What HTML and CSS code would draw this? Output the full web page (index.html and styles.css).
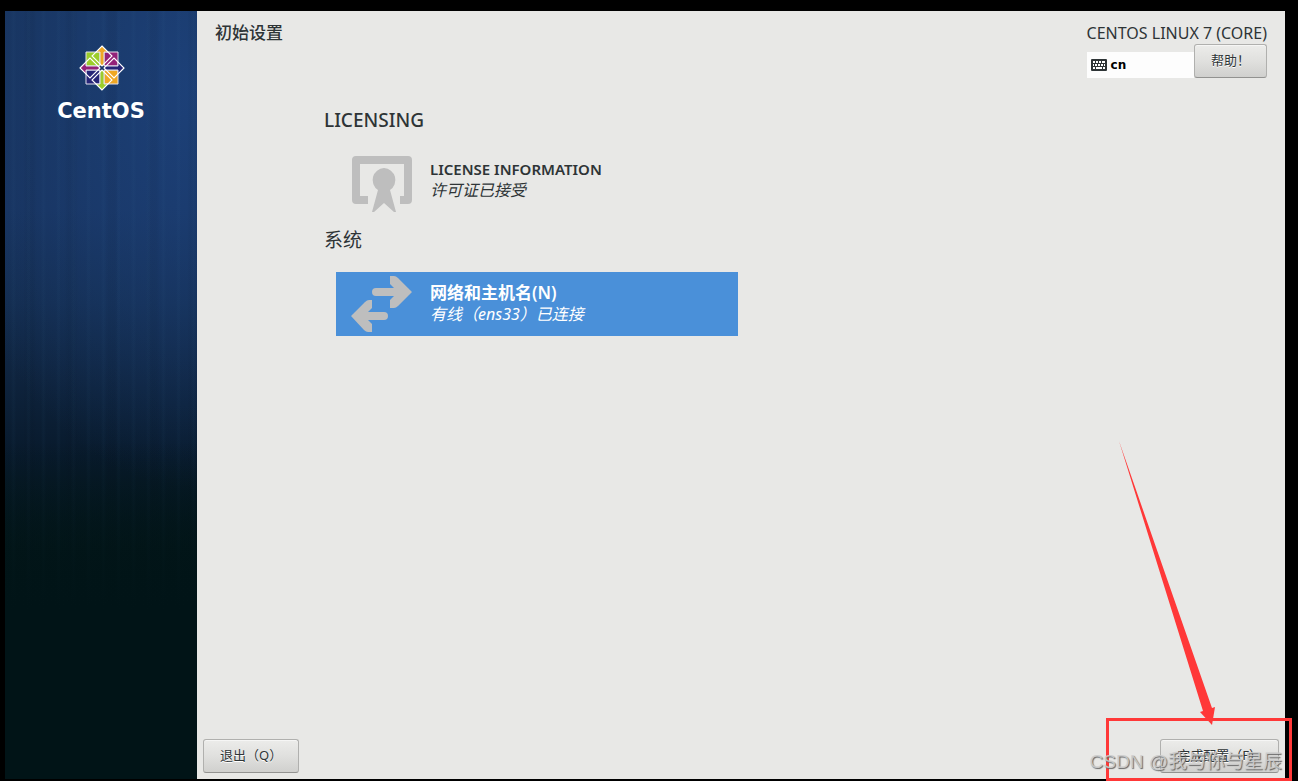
FILE: index.html
```html
<!DOCTYPE html>
<html lang="zh-CN">
<head>
<meta charset="utf-8">
<title>初始设置</title>
<link rel="stylesheet" href="styles.css">
</head>
<body>
<div class="screen">
  <aside class="sidebar">
    <svg class="logo" viewBox="-23 -23 46 46" aria-hidden="true">
      <g stroke="#e4e2ee" stroke-width="1">
        <path d="M-16-16H-2V-2H-16Z" fill="#9ccd2a"/>
        <path d="M2-16H16V-2H2Z" fill="#932279"/>
        <path d="M-16 2H-2V16H-16Z" fill="#262577"/>
        <path d="M2 2H16V16H2Z" fill="#efa724"/>
      </g>
      <g stroke="#e4e2ee" stroke-width="1">
        <path d="M0-22L6-16H2V-2H-2V-16H-6Z" fill="#efa724"/>
        <path d="M22 0L16 6V2H2V-2H16V-6Z" fill="#262577"/>
        <path d="M0 22L-6 16H-2V2H2V16H6Z" fill="#9ccd2a"/>
        <path d="M-22 0L-16-6V-2H-2V2H-16V6Z" fill="#932279"/>
      </g>
      <path d="M0-22L10-12L0-2L-10-12ZM22 0L12 10L2 0L12-10ZM0 22L-10 12L0 2L10 12ZM-22 0L-12-10L-2 0L-12 10Z" fill="none" stroke="#fff" stroke-width="1.1"/>
      <path d="M-2-2L2 2M2-2L-2 2" stroke="#1c3766" stroke-width="1.5"/>
    </svg>
    <div class="wordmark">CentOS</div>
  </aside>
  <main class="content">
    <header class="header">
      <h1 class="title">初始设置</h1>
      <div class="product">
        <div class="distro">CENTOS LINUX 7 (CORE)</div>
        <div class="tools">
          <button class="layout" type="button">
            <svg class="keyboard" viewBox="0 0 16 12" aria-hidden="true">
              <rect width="16" height="12" rx="1" fill="#2e3436"/>
              <path d="M2 3H4M5 3H7M8 3H10M11 3H14M2 6H3M4 6H6M7 6H9M10 6H12M13 6H14M2 9H4M5 9H11M12 9H14" stroke="#fff" stroke-width="2"/>
            </svg>
            cn
          </button>
          <button class="button" type="button">帮助！</button>
        </div>
      </div>
    </header>
    <div class="hub">
      <h2 class="category" lang="en">LICENSING</h2>
      <button class="spoke" type="button">
        <svg class="spoke-icon" viewBox="0 0 64 64" aria-hidden="true">
          <path d="M6 4H58Q62 4 62 8V48Q62 52 58 52H50V44H54V12H10V44H18V52H6Q2 52 2 48V8Q2 4 6 4Z" fill="#bebebe"/>
          <path d="M34 16A12 12 0 0 1 40 38L46 60H44L34 51L24 60H22L28 38A12 12 0 0 1 34 16Z" fill="#bebebe"/>
        </svg>
        <span class="spoke-text">
          <span class="spoke-title">LICENSE INFORMATION</span>
          <span class="spoke-status">许可证已接受</span>
        </span>
      </button>
      <h2 class="category">系统</h2>
      <button class="spoke selected" type="button">
        <svg class="spoke-icon" viewBox="0 0 64 64" aria-hidden="true">
          <path d="M26 16H44L40 12V4H44Q46 4 48 6L62 20L48 34Q46 36 44 36H40V28L44 24H26A4 4 0 0 1 26 16Z" fill="#bebebe"/>
          <path d="M34 48H18L22 52V60H18Q16 60 14 58L1 44L15 30Q17 28 19 28H22V36L18 40H34A4 4 0 0 1 34 48Z" fill="#bebebe"/>
        </svg>
        <span class="spoke-text">
          <span class="spoke-title">网络和主机名(N)</span>
          <span class="spoke-status">有线（ens33）已连接</span>
        </span>
      </button>
    </div>
    <footer class="footer">
      <button class="button" type="button">退出（Q）</button>
      <button class="button" type="button">完成配置（F）</button>
    </footer>
  </main>
</div>
<svg class="pointer" viewBox="0 0 98 286" aria-hidden="true">
  <path d="M1 2L94 269L97 268L94 286L82 273L85 272Z" fill="#ff3838"/>
</svg>
<div class="highlight"></div>
<div class="watermark">CSDN @我与你与星辰</div>
</body>
</html>
```
FILE: styles.css
```css
* {
  box-sizing: border-box;
}

body {
  position: relative;
  min-height: 100vh;
  margin: 0;
  padding: 11px 13px 2px 5px;
  display: flex;
  overflow: hidden;
  background: #000;
  color: #2e3436;
  font-family: "Noto Sans", "Noto Sans CJK SC", sans-serif;
  font-size: 15px;
}

button {
  margin: 0;
  border: 0;
  color: inherit;
  font: inherit;
}

h1,
h2 {
  margin: 0;
}

.screen {
  flex: 1;
  display: flex;
}

.sidebar {
  flex: 0 0 192px;
  display: flex;
  flex-direction: column;
  align-items: center;
  padding-top: 34px;
  background:
    linear-gradient(to bottom, rgba(1, 20, 23, 0) 56%, #011417 78%),
    repeating-linear-gradient(90deg, transparent 0 6px, rgba(70, 130, 170, 0.04) 8px 9px, transparent 11px 15px),
    repeating-linear-gradient(90deg, transparent 0 18px, rgba(0, 10, 20, 0.05) 22px 28px, transparent 32px 41px),
    radial-gradient(ellipse 260px 400px at 100% 10%, rgba(30, 68, 128, 0.8), transparent),
    linear-gradient(to bottom, #17325a 0, #17325c 26%, #132c4e 38%, #0e233d 48%, #081a2c 58%, #031619 70%, #011417 78%);
}

.logo {
  width: 46px;
  height: 46px;
  margin-left: 2px;
}

.wordmark {
  margin-top: 6px;
  color: #fff;
  font: bold 21px/28px "DejaVu Sans", sans-serif;
}

.content {
  flex: 1;
  display: flex;
  flex-direction: column;
  background: #e8e8e6;
}

.header {
  display: flex;
  justify-content: space-between;
  align-items: flex-start;
  padding: 12px 18px 0;
}

.title {
  font-size: 17px;
  line-height: 20px;
  font-weight: 500;
}

.distro {
  font-size: 16px;
  line-height: 21px;
}

.tools {
  display: flex;
  align-items: flex-end;
}

.layout {
  flex: 1;
  height: 26px;
  padding: 0 4px;
  display: flex;
  align-items: center;
  gap: 4px;
  background: #fdfdfd;
  color: #000;
  font: bold 12px "DejaVu Sans", sans-serif;
}

.keyboard {
  width: 16px;
  height: 12px;
}

.button {
  height: 34px;
  padding: 0 16px 4px;
  border: 1px solid #b0b0ae;
  border-bottom-color: #929290;
  border-radius: 3px;
  background: linear-gradient(to bottom, #ececea, #e0e0de 50%, #d0d0ce);
  box-shadow: inset 0 1px #f6f6f5;
  font-size: 13px;
  text-shadow: 0 1px #fff;
}

.hub {
  flex: 1;
  padding: 30px 20px 0 127px;
  display: flex;
  flex-direction: column;
  align-items: flex-start;
}

.category {
  margin-bottom: 20px;
  font-size: 19px;
  line-height: 24px;
  font-weight: 400;
}

.category:lang(en) {
  font-weight: 500;
}

.spoke {
  width: 402px;
  height: 64px;
  margin: 0 0 12px 12px;
  padding: 0 14px;
  display: flex;
  align-items: center;
  gap: 16px;
  background: none;
  text-align: left;
}

.spoke.selected {
  background: #4a90d9;
  color: #fff;
}

.spoke-icon {
  width: 64px;
  height: 64px;
}

.spoke-text {
  display: flex;
  flex-direction: column;
  padding-bottom: 10px;
}

.selected .spoke-text {
  padding-bottom: 2px;
}

.spoke-title {
  line-height: 22px;
  font-weight: 600;
}

.selected .spoke-title {
  font-size: 17px;
}

.spoke-status {
  font-size: 16px;
  line-height: 20px;
  font-style: italic;
}

.footer {
  display: flex;
  justify-content: space-between;
  padding: 0 6px;
  margin-bottom: 6px;
}

.pointer {
  position: absolute;
  right: 82px;
  bottom: 56px;
  width: 98px;
  height: 286px;
}

.highlight {
  position: absolute;
  right: 6px;
  bottom: 0;
  width: 186px;
  height: 63px;
  border: 3px solid #ff3838;
}

.watermark {
  position: absolute;
  right: 16px;
  bottom: 4px;
  color: rgba(205, 205, 205, 0.9);
  font: 19px/30px "Liberation Sans", "Noto Sans CJK SC", sans-serif;
  text-shadow: 1px 1px 1px #666;
  white-space: nowrap;
}
```
